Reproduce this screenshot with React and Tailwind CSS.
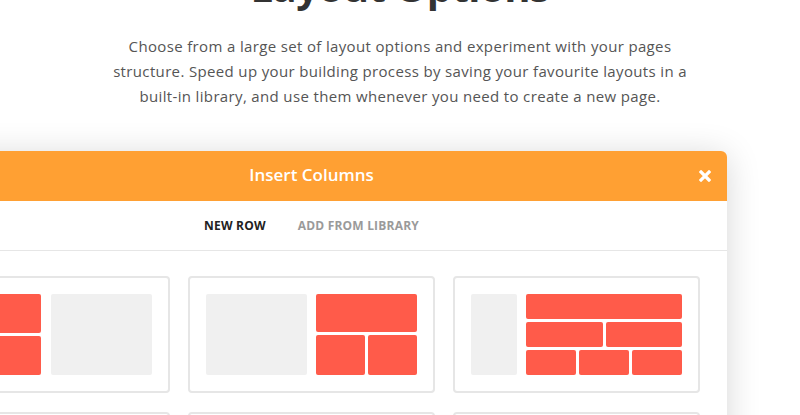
import React from "react";

const Red = ({ className = "" }) => (
  <div className={`bg-[#ff5b4a] rounded-[2px] ${className}`} />
);
const Gray = ({ className = "" }) => (
  <div className={`bg-[#f0f0f0] rounded-[2px] ${className}`} />
);

const Card = ({ children }) => (
  <div className="border-2 border-[#e6e6e6] rounded-[4px] p-4 bg-white">
    <div className="flex h-[81px]">{children}</div>
  </div>
);

const layouts = [
  // card 1: red stack left, gray right
  <Card key="a">
    <div className="w-[100px] flex flex-col gap-[3px]">
      <Red className="flex-1" />
      <Red className="flex-1" />
    </div>
    <Gray className="ml-[10px] flex-1" />
  </Card>,
  // card 2: gray left, red 1 + 2 right
  <Card key="b">
    <Gray className="w-[101px]" />
    <div className="ml-[9px] flex-1 flex flex-col gap-[3px]">
      <Red className="h-[38px]" />
      <div className="flex-1 flex gap-[3px]">
        <Red className="flex-1" />
        <Red className="flex-1" />
      </div>
    </div>
  </Card>,
  // card 3: narrow gray, red 1 + 2 + 3
  <Card key="c">
    <Gray className="w-[46px]" />
    <div className="ml-[9px] flex-1 flex flex-col gap-[3px]">
      <Red className="flex-1" />
      <div className="flex-1 flex gap-[3px]">
        <Red className="flex-1" />
        <Red className="flex-1" />
      </div>
      <div className="flex-1 flex gap-[3px]">
        <Red className="flex-1" />
        <Red className="flex-1" />
        <Red className="flex-1" />
      </div>
    </div>
  </Card>,
];

const secondRow = [
  <Card key="d">
    <Red className="flex-1" />
  </Card>,
  <Card key="e">
    <Red className="flex-1" />
    <Red className="ml-[9px] flex-1" />
  </Card>,
  <Card key="f">
    <Red className="flex-1" />
    <Red className="ml-[9px] flex-1" />
    <Red className="ml-[9px] flex-1" />
  </Card>,
];

export default function App() {
  return (
    <div className="w-[800px] h-[415px] overflow-hidden bg-white font-['Open_Sans',sans-serif]">
      {/* heading */}
      <h1 className="mt-[-37px] text-center text-[40px] leading-[48px] font-bold text-[#333] tracking-[-0.5px]">
        Layout Options
      </h1>
      <p className="mt-[23px] text-center text-[15px] leading-[25px] tracking-[0.35px] text-[#555]">
        Choose from a large set of layout options and experiment with your pages
        <br />
        structure. Speed up your building process by saving your favourite layouts in a
        <br />
        built-in library, and use them whenever you need to create a new page.
      </p>

      {/* modal */}
      <div className="mt-[42px] ml-[-104px] w-[831px] bg-white rounded-t-[6px] shadow-[0_4px_34px_rgba(0,0,0,0.16)]">
        <div className="h-[50px] bg-[#ffa033] rounded-t-[6px] flex items-center">
          <div className="w-[44px]" />
          <div className="flex-1 text-center text-white text-[17px] font-semibold pb-[2px]">
            Insert Columns
          </div>
          <div className="w-[44px] flex justify-center">
            <svg width="12" height="12" viewBox="0 0 12 12">
              <path
                d="M2 2 L10 10 M10 2 L2 10"
                stroke="white"
                strokeWidth="3.2"
                strokeLinecap="square"
              />
            </svg>
          </div>
        </div>

        <div className="h-[50px] border-b border-[#e6e6e6] flex items-center justify-center gap-8 text-[12px] font-bold tracking-[0.2px]">
          <span className="text-[#222]">NEW ROW</span>
          <span className="text-[#9a9a9a]">ADD FROM LIBRARY</span>
        </div>

        <div className="px-[27px] pt-[25px] grid grid-cols-3 gap-x-[18px] gap-y-[19px]">
          {layouts}
          {secondRow}
        </div>
      </div>
    </div>
  );
}
